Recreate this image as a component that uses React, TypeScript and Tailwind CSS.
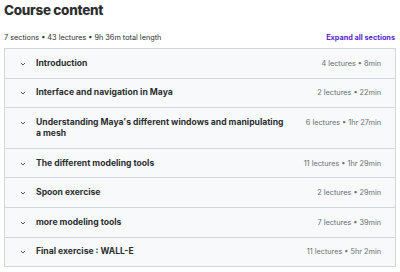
const sections = [
  { title: "Introduction", meta: "4 lectures • 8min" },
  { title: "Interface and navigation in Maya", meta: "2 lectures • 22min" },
  {
    title: "Understanding Maya's different windows and manipulating a mesh",
    meta: "6 lectures • 1hr 27min",
  },
  { title: "The different modeling tools", meta: "11 lectures • 1hr 29min" },
  { title: "Spoon exercise", meta: "2 lectures • 29min" },
  { title: "more modeling tools", meta: "7 lectures • 39min" },
  { title: "Final exercise : WALL-E", meta: "11 lectures • 5hr 2min" },
];

function Chevron() {
  return (
    <svg className="mt-[3px] h-[6px] w-[6px] shrink-0 text-[#2d2f31]" viewBox="0 0 12 12" fill="none">
      <path d="M2.5 4.5L6 8l3.5-3.5" stroke="currentColor" strokeWidth={1.6} strokeLinecap="round" strokeLinejoin="round" />
    </svg>
  );
}

export default function App() {
  return (
    <div className="h-[272px] w-[400px] bg-white px-[4px] font-['Inter',sans-serif] text-[#2d2f31]">
      <h2 className="pt-[1px] text-[13.5px] font-extrabold leading-[18px] tracking-[-0.3px]">Course content</h2>
      <div className="mt-[14px] flex items-center justify-between pb-[5px] text-[7.3px] leading-[10px]">
        <span className="text-[#2d2f31]">7 sections • 43 lectures • 9h 36m total length</span>
        <button className="mr-[1px] font-bold text-[#5624d0]">Expand all sections</button>
      </div>
      <div className="w-[392px] border border-[#d1d7dc]">
        {sections.map((s, i) => (
          <div
            key={s.title}
            className={`flex items-start bg-[#f7f9fa] py-[8.8px] pl-[15px] pr-[14px] ${i > 0 ? "border-t border-[#d1d7dc]" : ""}`}
          >
            <Chevron />
            <div className="ml-[10px] flex-1 pr-[16px] text-[8.6px] font-bold leading-[11px]">{s.title}</div>
            <div className="whitespace-nowrap text-[7.3px] leading-[11px] text-[#6a6f73]">{s.meta}</div>
          </div>
        ))}
      </div>
    </div>
  );
}
